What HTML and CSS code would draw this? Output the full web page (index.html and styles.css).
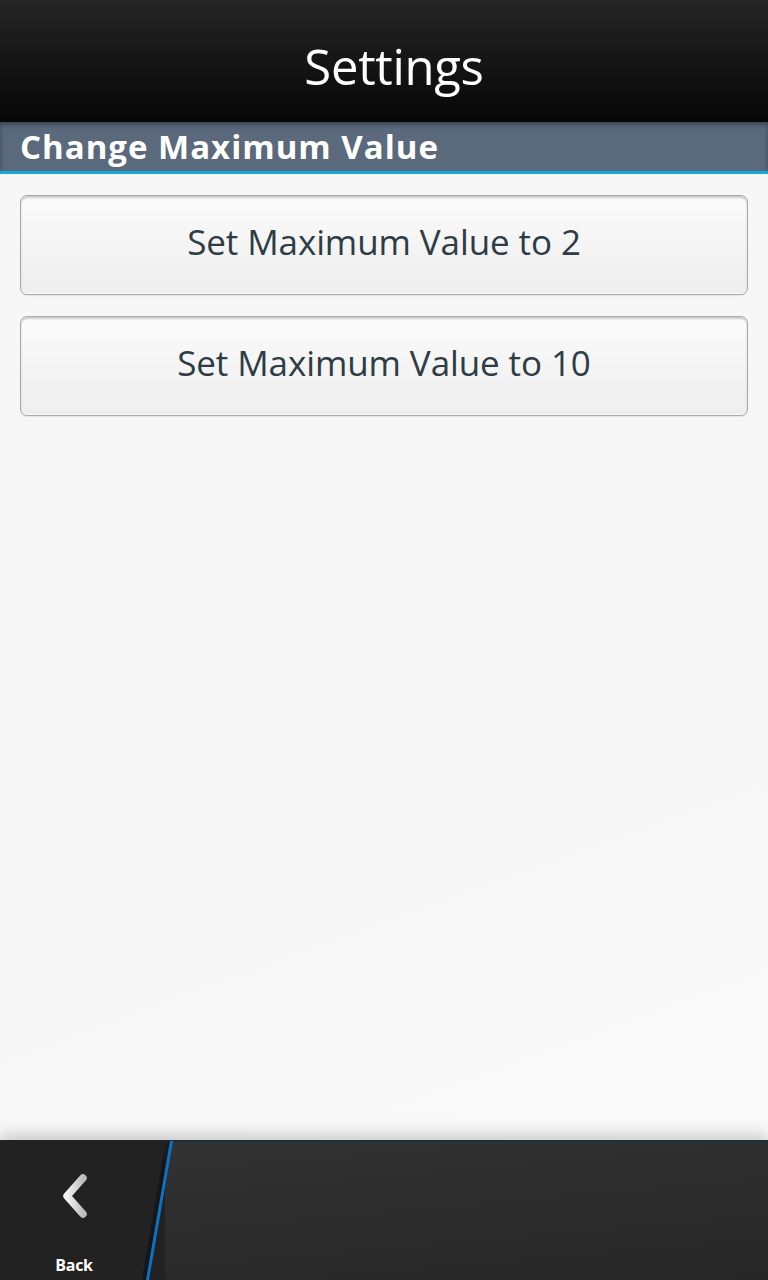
FILE: index.html
```html
<!DOCTYPE html>
<html>
<head>
<meta charset="utf-8">
<link rel="stylesheet" href="styles.css">
</head>
<body>
<div class="screen">
  <header class="titlebar"><h1>Settings</h1></header>
  <div class="section-header">Change Maximum Value</div>
  <main class="content">
    <button class="btn">Set Maximum Value to 2</button>
    <button class="btn">Set Maximum Value to 10</button>
  </main>
  <footer class="actionbar">
    <div class="back">
      <svg class="chev" width="40" height="48" viewBox="0 0 40 48">
        <defs>
          <linearGradient id="cg" x1="0" y1="0" x2="1" y2="0">
            <stop offset="0" stop-color="#f4f4f4"/>
            <stop offset="1" stop-color="#bdbdbd"/>
          </linearGradient>
        </defs>
        <polyline points="25,6 9,24 25,42" fill="none" stroke="url(#cg)" stroke-width="7.5" stroke-linecap="round" stroke-linejoin="round"/>
      </svg>
      <span class="back-label">Back</span>
    </div>
    <div class="rest"></div>
    <svg class="divider" width="40" height="140" viewBox="0 0 40 140">
      <polygon points="26,1 31,1 7,140 2,140" fill="#111" opacity="0.7"/>
      <polygon points="30,1 33,1 9,140 6,140" fill="#0b72c4"/>
    </svg>
  </footer>
</div>
</body>
</html>
```
FILE: styles.css
```css
* { box-sizing: border-box; }
html, body { margin: 0; padding: 0; }
body { width: 768px; height: 1280px; overflow: hidden; font-family: "Open Sans", "Noto Sans", sans-serif; background: #f7f7f7; }
.screen { width: 768px; height: 1280px; display: flex; flex-direction: column; }
.titlebar {
  height: 122px; flex: none;
  background: linear-gradient(#252525, #141414 55%, #070707);
  display: flex; align-items: center; justify-content: center;
}
.titlebar h1 { margin: 0; margin-top: 10px; font-weight: 400; color: #fff; font-size: 49px; letter-spacing: -0.3px; padding-left: 20px; }
.section-header {
  height: 52px; flex: none;
  background: #5a6a7c;
  border-bottom: 3px solid #16a8d9;
  color: #fff; font-weight: 700; font-size: 33px; letter-spacing: 1px;
  padding-left: 20px; line-height: 49px;
  box-shadow: inset 0 3px 4px rgba(0,0,0,0.35);
}
.content {
  flex: 1; display: flex; flex-direction: column; gap: 21px;
  padding: 21px 20px 0;
  background: linear-gradient(160deg, #f7f7f7 60%, #f9f9f9);
  position: relative;
}
.btn {
  height: 100px; width: 100%;
  border: 1px solid #a9a9a9; border-radius: 7px;
  background: linear-gradient(#fbfbfb, #f3f3f3 60%, #eeeeee);
  box-shadow: inset 0 2px 2px rgba(0,0,0,0.18), inset 0 -1px 1px rgba(255,255,255,0.8), 0 1px 1px rgba(0,0,0,0.08);
  font-family: "Open Sans", "Noto Sans", sans-serif;
  font-size: 35px; color: #2e3c46; letter-spacing: -0.1px;
  padding: 0; padding-bottom: 8px;
}
.actionbar {
  height: 140px; flex: none; position: relative; display: flex;
  box-shadow: 0 -6px 14px rgba(0,0,0,0.18);
}
.back {
  width: 165px; flex: none; background: #222;
  display: flex; flex-direction: column; align-items: center;
  padding-top: 32px; padding-right: 17px;
}
.chev { display: block; margin-left: 8px; }
.back-label { color: #fff; font-weight: 700; font-size: 16px; margin-top: 34px; letter-spacing: -0.3px; }
.rest { flex: 1; background: linear-gradient(175deg, #323232, #262626); border-top: 2px solid #1f2f3a; }
.divider { position: absolute; left: 140px; top: 0; }
```
